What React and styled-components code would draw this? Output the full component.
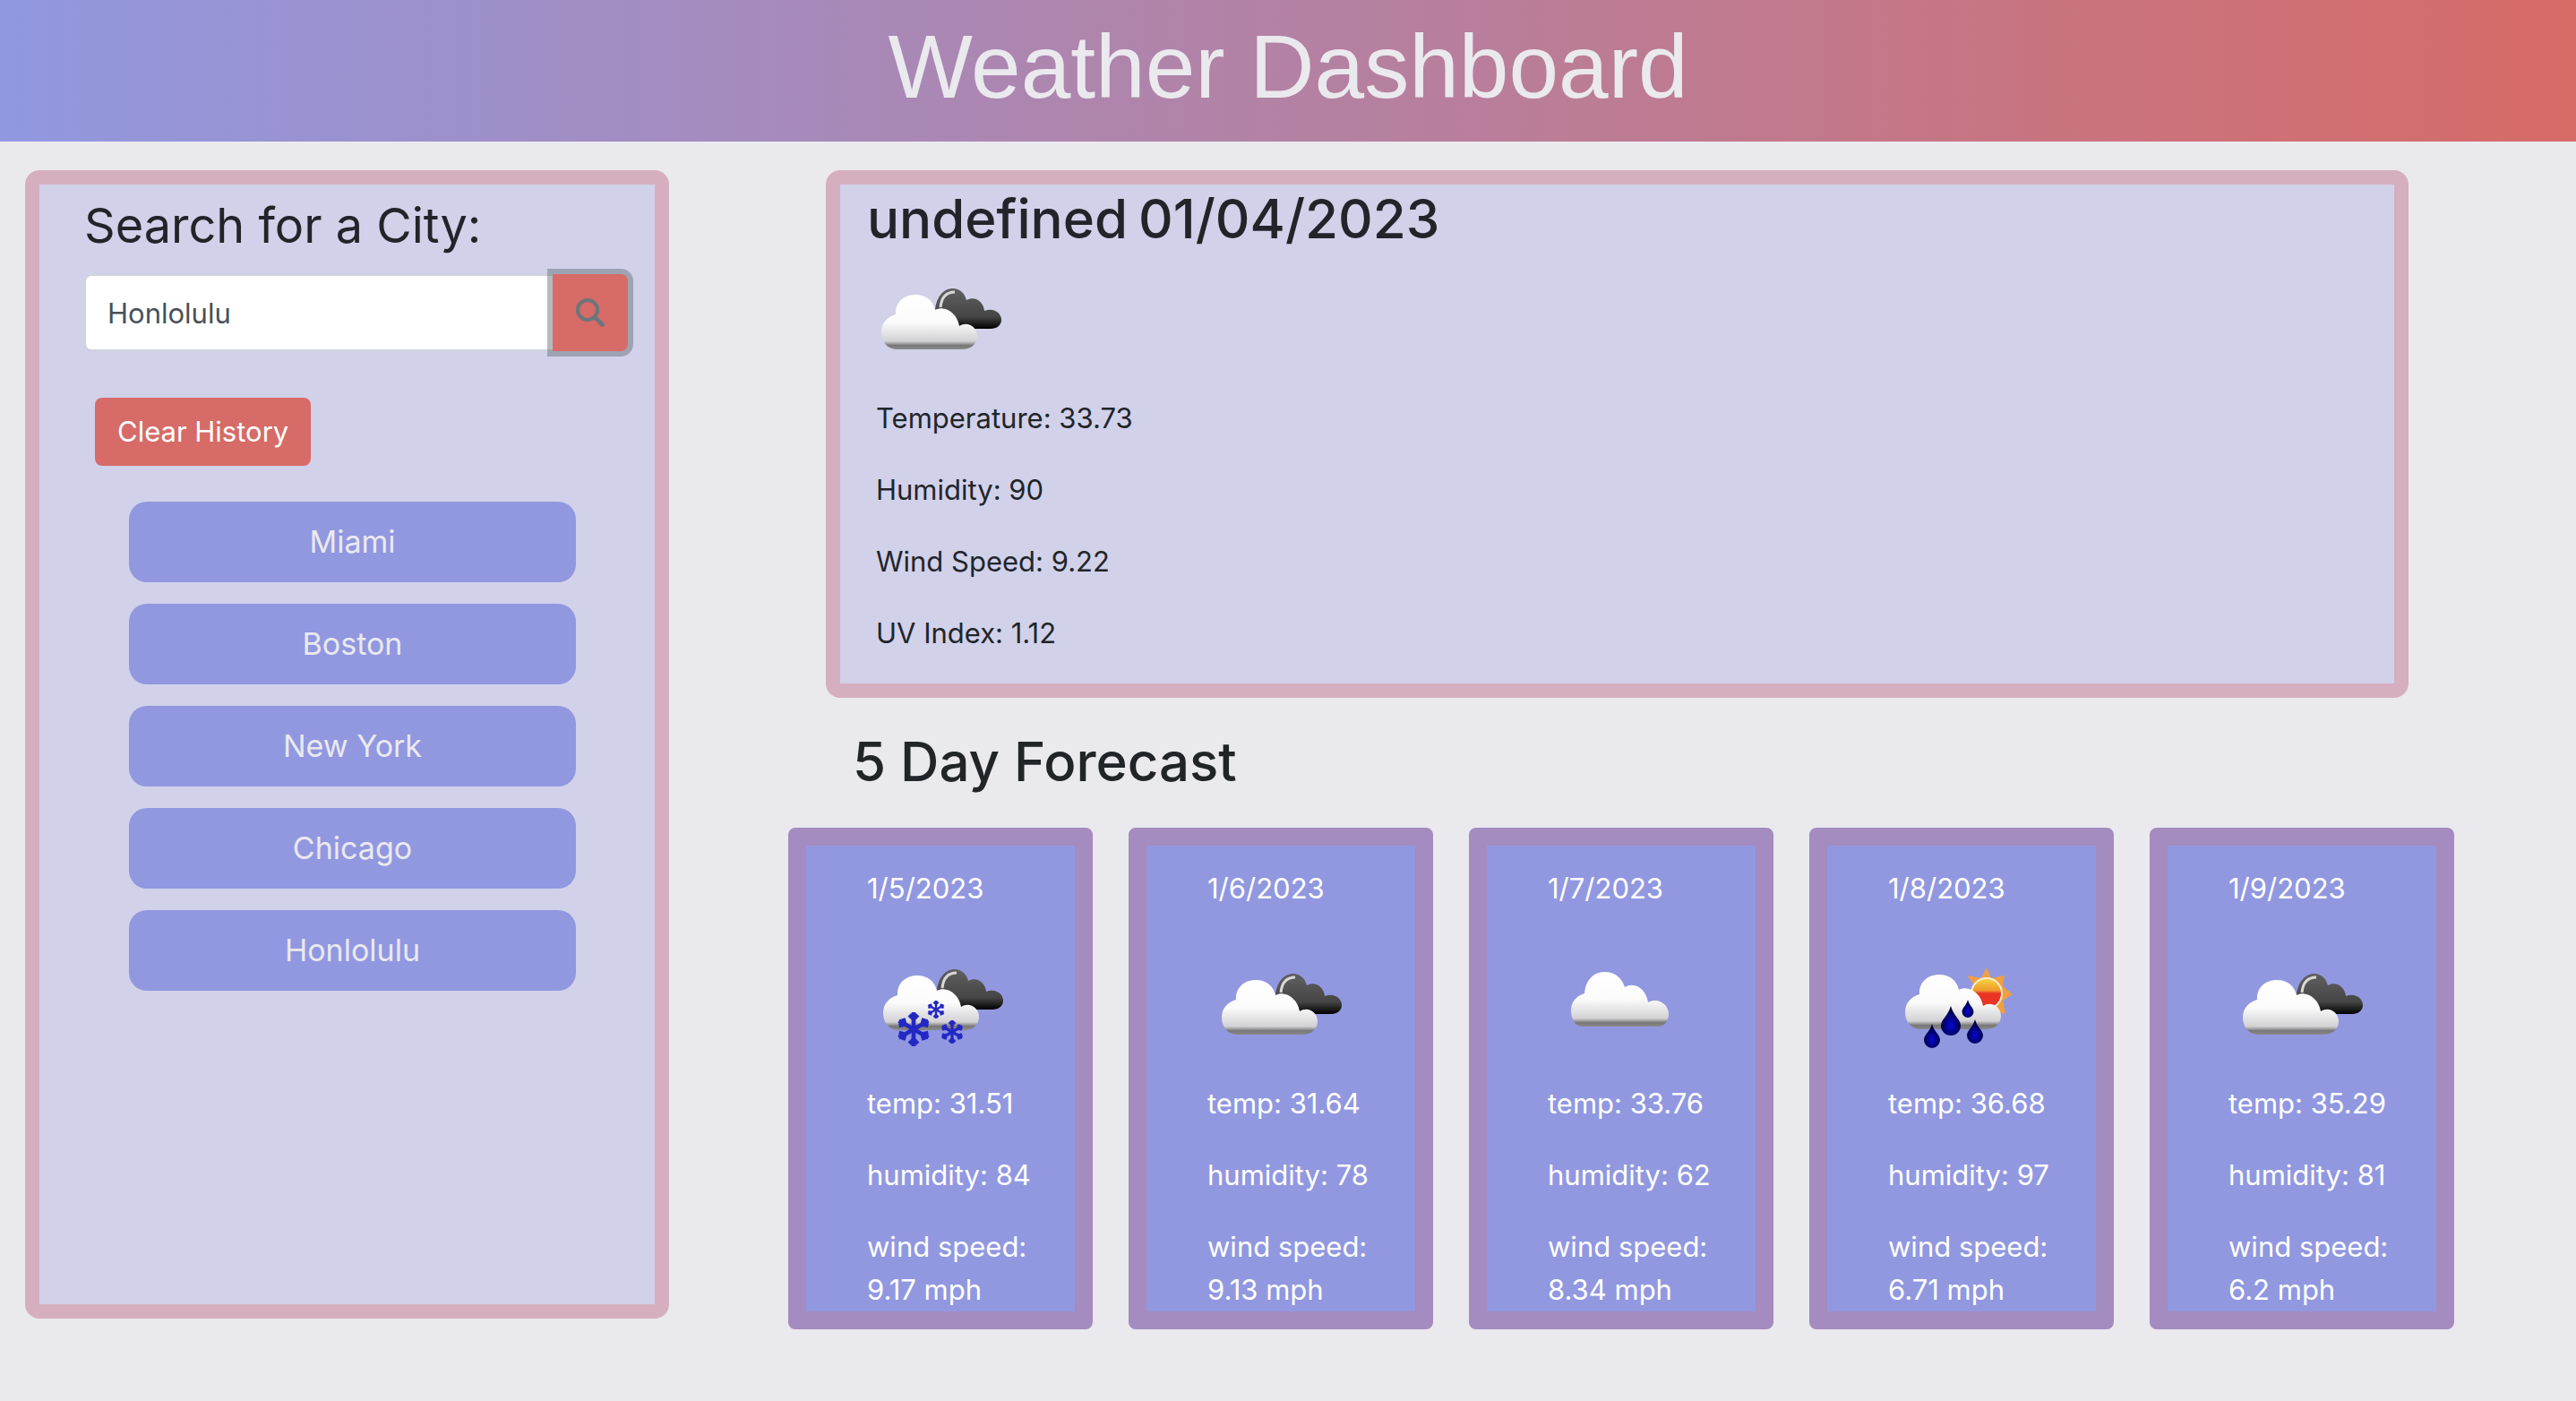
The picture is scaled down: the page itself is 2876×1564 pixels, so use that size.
import React, { useId, useState } from "react";
import styled, { createGlobalStyle } from "styled-components";

const color = {
  page: "#eae9ee",
  ink: "#212529",
  blue: "#9198e0",
  purple: "#a48bc0",
  red: "#d66b67",
  rose: "#d5afc0",
  lilac: "#d1d1ea",
};

const GlobalStyle = createGlobalStyle`
  *, *::before, *::after { box-sizing: border-box; }
  body {
    margin: 0;
    background: ${color.page};
    color: ${color.ink};
    font-family: Inter, "Liberation Sans", sans-serif;
    font-size: 31px;
    line-height: 48px;
  }
  h1, h2, p { margin: 0; }
`;

const Header = styled.header`
  padding: 14px 0 24px;
  text-align: center;
  background: linear-gradient(90deg, ${color.blue}, ${color.red});
`;

const Title = styled.h1`
  font-family: "Liberation Sans", Arial, sans-serif;
  font-size: 100px;
  font-weight: 400;
  line-height: 120px;
  color: ${color.page};
`;

const Layout = styled.div`
  display: flex;
  align-items: flex-start;
  gap: 133px;
  padding: 32px 136px 79px 28px;
`;

const Panel = styled.section`
  border: 16px solid ${color.rose};
  border-radius: 16px;
  background: ${color.lilac};
`;

const Sidebar = styled(Panel).attrs({ as: "aside" })`
  flex: none;
  width: 25vw;
  min-height: 82vh;
  padding: 8px 30px 32px 50px;
`;

const SearchLabel = styled.label`
  display: block;
  font-size: 54px;
  line-height: 76px;
`;

const SearchForm = styled.form`
  display: flex;
  align-items: stretch;
  margin-top: 16px;
`;

const SearchInput = styled.input`
  flex: 1;
  min-width: 0;
  height: 86px;
  padding: 12px 24px;
  border: 2px solid #ced4da;
  border-right: 0;
  border-radius: 8px 0 0 8px;
  background: #fff;
  color: #495057;
  font: inherit;
  outline: none;
`;

const SearchButton = styled.button`
  display: grid;
  place-items: center;
  width: 84px;
  padding: 0;
  border: 0;
  border-radius: 0 8px 8px 0;
  background: ${color.red};
  color: #6c757d;
  box-shadow: 0 0 0 6px rgba(108, 117, 125, 0.5);
`;

const ClearButton = styled.button`
  height: 76px;
  margin: 52px 0 40px 12px;
  padding: 0 25px;
  border: 0;
  border-radius: 8px;
  background: ${color.red};
  color: #fff;
  font: inherit;
`;

const History = styled.ul`
  display: grid;
  gap: 24px;
  margin: 0;
  padding: 0 58px 0 50px;
  list-style: none;
`;

const CityButton = styled.button`
  display: block;
  width: 100%;
  height: 90px;
  border: 0;
  border-radius: 20px;
  background: ${color.blue};
  color: ${color.page};
  font: inherit;
  font-size: 34px;
`;

const Main = styled.main`
  flex: 1;
  min-width: 0;
`;

const Current = styled(Panel)`
  margin: 0 51px 0 42px;
  padding: 0 30px;
`;

const Heading = styled.h2`
  display: flex;
  gap: 12px;
  font-size: 60px;
  font-weight: 500;
  line-height: 77px;
`;

const Readings = styled.div`
  display: grid;
  gap: 32px;
  padding: 32px 10px;
`;

const ForecastHeading = styled(Heading)`
  margin: 33px 72px 35px;
`;

const Days = styled.div`
  display: grid;
  grid-template-columns: repeat(5, 1fr);
  gap: 40px;
`;

const Day = styled.article`
  display: grid;
  gap: 32px;
  padding: 24px 48px 0 68px;
  border: 20px solid ${color.purple};
  border-radius: 8px;
  background: ${color.blue};
  color: #fff;
`;

const IconSvg = styled.svg`
  display: block;
  width: 160px;
  height: 128px;
`;

function SearchIcon() {
  return (
    <svg width="32" height="32" viewBox="0 0 32 32" fill="none" stroke="currentColor" aria-hidden="true">
      <circle cx="13" cy="13" r="11" strokeWidth="4" />
      <path d="M21 21L29.5 29.5" strokeWidth="4.6" strokeLinecap="round" />
    </svg>
  );
}

function Flake({ x, y, r }) {
  return (
    <g transform={`translate(${x} ${y})`} stroke="#2328c4" strokeWidth={r / 4}>
      {[0, 60, 120, 180, 240, 300].map((a) => (
        <path key={a} transform={`rotate(${a})`} fill="none"
          d={`M0 0V${-r} M${-r / 4} ${-r * 0.85}L0 ${-r * 0.6}L${r / 4} ${-r * 0.85}`} />
      ))}
    </g>
  );
}

function Drop({ x, y, w, h, fill }) {
  const r = w / 2;
  return (
    <path fill={fill}
      d={`M${x} ${y}C${x + r * 0.3} ${y + h * 0.35} ${x + r} ${y + h * 0.45} ${x + r} ${y + h - r}A${r} ${r} 0 0 1 ${x - r} ${y + h - r}C${x - r} ${y + h * 0.45} ${x - r * 0.3} ${y + h * 0.35} ${x} ${y}Z`} />
  );
}

const FRONT = "M34 107C23 107 16 99 16 88C16 78 22 71 32 68C31 55 41 46 54 46C66 46 74 53 76 63C87 57 101 67 103 81C112 75 123 82 123 92C123 101 116 107 106 107Z";
const BACK = "M76 64C77 49 85 39 96 39C103 39 109 44 111 52C121 47 130 54 131 64C141 60 150 66 150 74C150 80 145 84 138 84H104C100 72 92 64 76 64Z";
const LONE = "M39 98C31 98 26 90 26 80C26 70 32 64 41 61C42 47 50 37 64 37C75 37 83 44 86 54C98 47 110 57 112 71C124 65 135 74 135 84C135 92 130 98 123 98Z";

function WeatherIcon({ kind }) {
  const id = useId();
  const white = `${id}white`;
  const dark = `${id}dark`;
  const sun = `${id}sun`;
  const rain = `${id}rain`;
  const lift = kind === "snow" ? "translate(2 -5)" : undefined;
  return (
    <IconSvg viewBox="0 0 160 128" role="img" aria-label={kind}>
      <defs>
        <linearGradient id={white} x2="0" y2="1">
          <stop offset="0" stopColor="#fff" />
          <stop offset=".5" stopColor="#fbfbfb" />
          <stop offset=".85" stopColor="#d2d2d4" />
          <stop offset=".93" stopColor="#777" />
          <stop offset="1" stopColor="#8a8a8a" />
        </linearGradient>
        <linearGradient id={dark} x2="0" y2="1">
          <stop offset="0" stopColor="#606060" />
          <stop offset=".7" stopColor="#454545" />
          <stop offset="1" stopColor="#000" />
        </linearGradient>
        <linearGradient id={sun} x2="0" y2="1">
          <stop offset="0" stopColor="#f8d63c" />
          <stop offset=".4" stopColor="#f09a30" />
          <stop offset=".5" stopColor="#ea3423" />
        </linearGradient>
        <radialGradient id={rain} cy=".65">
          <stop offset="0" stopColor="#0606d8" />
          <stop offset="1" stopColor="#02023f" />
        </radialGradient>
      </defs>
      {kind === "cloud" && <path d={LONE} fill={`url(#${white})`} />}
      {(kind === "clouds" || kind === "snow") && (
        <g transform={lift}>
          <path d={BACK} fill={`url(#${dark})`} />
          <path d="M82 60C83 50 88 43 98 43" fill="none" stroke="#d8d8d8" strokeWidth="3" />
          <path d={FRONT} fill={`url(#${white})`} />
        </g>
      )}
      {kind === "snow" && (
        <>
          <Flake x={52} y={101} r={19} />
          <Flake x={77} y={79} r={10} />
          <Flake x={95} y={104} r={13} />
        </>
      )}
      {kind === "rain" && (
        <>
          <path fill="#f0a040"
            d="M110 32L115 44L130 41L128 53L139 62L128 69L131 84L118 80L96 65L99 55L88 41L104 44Z" />
          <circle cx="110" cy="61" r="17" fill={`url(#${sun})`} stroke="#f8ebd0" strokeWidth="2" />
          <path transform="translate(3 -6)" d={FRONT} fill={`url(#${white})`} />
          <Drop x={70} y={75} w={22} h={33} fill={`url(#${rain})`} />
          <Drop x={89} y={68} w={13} h={20} fill={`url(#${rain})`} />
          <Drop x={49} y={95} w={18} h={27} fill={`url(#${rain})`} />
          <Drop x={97} y={90} w={18} h={27} fill={`url(#${rain})`} />
        </>
      )}
    </IconSvg>
  );
}

const cities = ["Miami", "Boston", "New York", "Chicago", "Honlolulu"];

const forecast = [
  { date: "1/5/2023", icon: "snow", temp: "31.51", humidity: 84, wind: "9.17" },
  { date: "1/6/2023", icon: "clouds", temp: "31.64", humidity: 78, wind: "9.13" },
  { date: "1/7/2023", icon: "cloud", temp: "33.76", humidity: 62, wind: "8.34" },
  { date: "1/8/2023", icon: "rain", temp: "36.68", humidity: 97, wind: "6.71" },
  { date: "1/9/2023", icon: "clouds", temp: "35.29", humidity: 81, wind: "6.2" },
];

export default function App() {
  const [city, setCity] = useState("Honlolulu");
  return (
    <>
      <GlobalStyle />
      <Header>
        <Title>Weather Dashboard</Title>
      </Header>
      <Layout>
        <Sidebar>
          <SearchLabel htmlFor="city">Search for a City:</SearchLabel>
          <SearchForm onSubmit={(e) => e.preventDefault()}>
            <SearchInput id="city" value={city} onChange={(e) => setCity(e.target.value)} />
            <SearchButton type="submit" aria-label="Search">
              <SearchIcon />
            </SearchButton>
          </SearchForm>
          <ClearButton type="button">Clear History</ClearButton>
          <History>
            {cities.map((name) => (
              <li key={name}>
                <CityButton type="button" onClick={() => setCity(name)}>{name}</CityButton>
              </li>
            ))}
          </History>
        </Sidebar>
        <Main>
          <Current>
            <Heading>
              <span>undefined</span>
              <span>01/04/2023</span>
            </Heading>
            <WeatherIcon kind="clouds" />
            <Readings>
              <p>Temperature: 33.73</p>
              <p>Humidity: 90</p>
              <p>Wind Speed: 9.22</p>
              <p>UV Index: 1.12</p>
            </Readings>
          </Current>
          <ForecastHeading>5 Day Forecast</ForecastHeading>
          <Days>
            {forecast.map((day) => (
              <Day key={day.date}>
                <p>{day.date}</p>
                <WeatherIcon kind={day.icon} />
                <p>temp: {day.temp}</p>
                <p>humidity: {day.humidity}</p>
                <p>wind speed: {day.wind} mph</p>
              </Day>
            ))}
          </Days>
        </Main>
      </Layout>
    </>
  );
}
